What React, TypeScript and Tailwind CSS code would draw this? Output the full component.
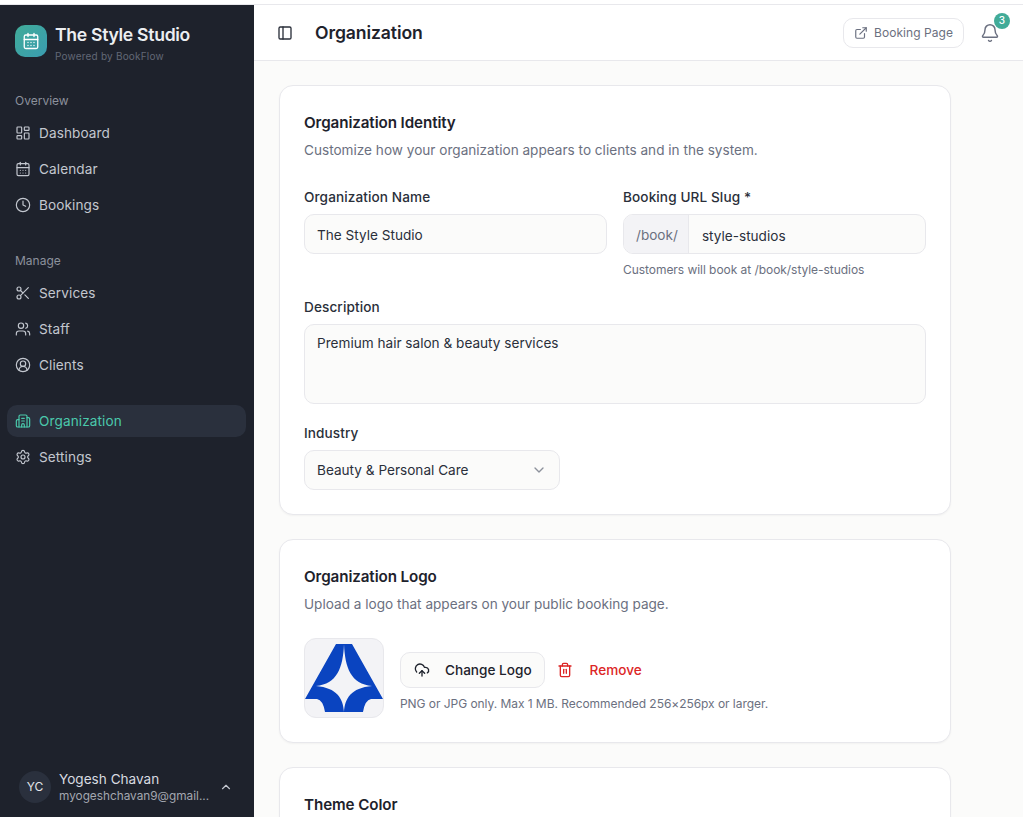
import {
  Bell,
  Building2,
  CalendarDays,
  ChevronDown,
  ChevronUp,
  CircleUserRound,
  Clock,
  CloudUpload,
  ExternalLink,
  LayoutDashboard,
  PanelLeft,
  Scissors,
  Settings,
  Trash2,
  Users,
} from 'lucide-react'
import type { ComponentType, ReactNode } from 'react'

const font = { fontFamily: 'Inter, "Liberation Sans", sans-serif' }

type NavItem = { label: string; icon: ComponentType<{ className?: string; strokeWidth?: number }>; active?: boolean }

const overview: NavItem[] = [
  { label: 'Dashboard', icon: LayoutDashboard },
  { label: 'Calendar', icon: CalendarDays },
  { label: 'Bookings', icon: Clock },
]

const manage: NavItem[] = [
  { label: 'Services', icon: Scissors },
  { label: 'Staff', icon: Users },
  { label: 'Clients', icon: CircleUserRound },
]

const system: NavItem[] = [
  { label: 'Organization', icon: Building2, active: true },
  { label: 'Settings', icon: Settings },
]

function NavRow({ item }: { item: NavItem }) {
  const Icon = item.icon
  return (
    <div
      className={
        item.active
          ? 'ml-[7px] mr-[8px] flex h-8 items-center gap-2 rounded-[10px] bg-[#2a303d] px-2 text-[13.6px] text-[#4ac9ac]'
          : 'ml-[7px] mr-[8px] flex h-8 items-center gap-2 rounded-[10px] px-2 text-[13.6px] text-[#c3c7cf]'
      }
    >
      <Icon className="h-4 w-4 shrink-0" strokeWidth={1.75} />
      <span className="tracking-[0.1px]">{item.label}</span>
    </div>
  )
}

function Sidebar() {
  return (
    <aside className="flex h-full w-[254px] shrink-0 flex-col bg-[#1e222c]">
      <div className="flex items-start gap-2 px-[15px] pt-[18px]">
        <div className="mt-[2px] flex h-8 w-8 items-center justify-center rounded-[10px] bg-gradient-to-br from-[#41ab98] to-[#3a9cb0]">
          <CalendarDays className="h-[18px] w-[18px] text-white" strokeWidth={1.75} />
        </div>
        <div className="flex flex-col">
          <span className="text-[17.6px] leading-[24px] font-semibold tracking-[-0.3px] text-[#eceef1]">The Style Studio</span>
          <span className="mt-[3px] text-[10px] leading-[12px] tracking-[0.2px] text-[#626876]">Powered by BookFlow</span>
        </div>
      </div>
      <div className="mt-[31px] px-[15px] text-[12px] leading-[16px] text-[#8c919c]">Overview</div>
      <div className="mt-[8px] flex flex-col gap-1">
        {overview.map(item => <NavRow key={item.label} item={item} />)}
      </div>
      <div className="mt-[32px] px-[15px] text-[12px] leading-[16px] text-[#8c919c]">Manage</div>
      <div className="mt-[8px] flex flex-col gap-1">
        {manage.map(item => <NavRow key={item.label} item={item} />)}
      </div>
      <div className="mt-[24px] flex flex-col gap-1">
        {system.map(item => <NavRow key={item.label} item={item} />)}
      </div>
      <div className="mt-auto flex items-center pb-[13px] pl-[19px] pr-[21px]">
        <div className="flex h-8 w-8 shrink-0 items-center justify-center rounded-full bg-[#2a303d] text-[12px] text-[#e4e6ea]">YC</div>
        <div className="ml-2 min-w-0 flex-1">
          <div className="text-[13.6px] leading-[18px] text-[#d8dbe0]">Yogesh Chavan</div>
          <div className="whitespace-nowrap text-[11.8px] leading-[16px] text-[#a3a7b0]">myogeshchavan9@gmail...</div>
        </div>
        <ChevronUp className="h-[14px] w-[14px] shrink-0 text-[#c3c7cf]" />
      </div>
    </aside>
  )
}

function Header() {
  return (
    <header className="flex h-[56px] shrink-0 items-center border-b border-[#e8e8ec] bg-white pl-[23px] pr-[23px]">
      <PanelLeft className="h-4 w-4 text-[#2a2f3a]" />
      <h1 className="ml-[22px] pt-[2px] text-[17.6px] font-semibold tracking-[-0.1px] text-[#1e222c]">Organization</h1>
      <div className="ml-auto flex h-[30px] items-center gap-[6px] rounded-[10px] border border-[#e8e8ec] bg-white px-[10px] text-[12px] tracking-[0.05px] text-[#6b7080]">
        <ExternalLink className="h-[14px] w-[14px]" />
        Booking Page
      </div>
      <div className="relative ml-4 flex h-5 w-5 items-center justify-center">
        <Bell className="h-5 w-5 text-[#6b7080]" strokeWidth={1.75} />
        <span className="absolute -right-[10px] -top-[10px] flex h-4 w-4 items-center justify-center rounded-full bg-[#41ab98] text-[10px] font-medium text-white">3</span>
      </div>
    </header>
  )
}

function Logo() {
  return (
    <div className="flex h-20 w-20 shrink-0 items-center justify-center overflow-hidden rounded-[12px] border border-[#e8e8ec] bg-[#f3f3f6]">
      <svg viewBox="0 0 80 80" className="h-20 w-20 shrink-0">
        <path
          d="M32 6 H48 L79 61 H67 Q61 62 59 74 H21 Q19 62 13 61 H1 Z"
          fill="#0a44c0"
        />
        <path
          d="M40 6 C39 30 33 46 12 48 C33 50 39 60 40 74 C41 60 47 50 68 48 C47 46 41 30 40 6 Z"
          fill="#f3f3f6"
        />
      </svg>
    </div>
  )
}

function Card({ title, subtitle, children }: { title: string; subtitle?: string; children?: ReactNode }) {
  return (
    <section className="w-[672px] shrink-0 rounded-[14px] border border-[#e8e8ec] bg-white p-6 shadow-[0_1px_2px_rgba(0,0,0,0.04)]">
      <h2 className="pt-[1px] text-[15.2px] leading-[24px] font-semibold tracking-[-0.1px] text-[#1e222c]">{title}</h2>
      {subtitle && <p className="mt-[5px] text-[13.6px] leading-[20px] text-[#6b7080]">{subtitle}</p>}
      {children}
    </section>
  )
}

const inputClass = 'flex h-10 items-center rounded-[10px] border border-[#e8e8ec] bg-[#fbfbfa] px-3 text-[13.6px] text-[#2a2f3a]'
const labelClass = 'mb-[7px] block text-[13.6px] leading-[20px] font-medium tracking-[0.1px] text-[#2a2f3a]'

export default function App() {
  return (
    <div style={font} className="flex h-screen flex-col overflow-hidden bg-white">
      <div className="h-[4px] shrink-0 bg-white" />
      <div className="flex min-h-0 flex-1 border-t border-[#e8e8ec]">
        <Sidebar />
        <main className="flex min-w-0 flex-1 flex-col">
          <Header />
          <div className="flex min-h-0 flex-1 flex-col gap-6 overflow-hidden bg-[#fbfbfa] pl-[25px] pt-6">
            <Card title="Organization Identity" subtitle="Customize how your organization appears to clients and in the system.">
              <div className="mt-[27px] grid grid-cols-2 gap-x-4">
                <div>
                  <label className={labelClass}>Organization Name</label>
                  <div className={`${inputClass} pt-[2px]`}>The Style Studio</div>
                </div>
                <div>
                  <label className={labelClass}>Booking URL Slug *</label>
                  <div className="flex h-10 overflow-hidden rounded-[10px] border border-[#e8e8ec] bg-[#fbfbfa] text-[13.6px]">
                    <span className="flex items-center border-r border-[#e8e8ec] bg-[#f3f3f6] pl-3 pr-[10px] pt-[2px] text-[#6b7080]">/book/</span>
                    <span className="flex items-center px-[13px] pt-[4px] text-[#2a2f3a]">style-studios</span>
                  </div>
                  <p className="mt-[8px] text-[12px] leading-[16px] tracking-[-0.05px] text-[#6b7080]">Customers will book at /book/style-studios</p>
                </div>
              </div>
              <label className={`${labelClass} mt-[19px]`}>Description</label>
              <div className="h-20 rounded-[10px] border border-[#e8e8ec] bg-[#fbfbfa] px-3 py-2 text-[13.6px] leading-[20px] text-[#2a2f3a]">
                Premium hair salon &amp; beauty services
              </div>
              <label className={`${labelClass} mt-[19px]`}>Industry</label>
              <div className={`${inputClass} w-[256px] justify-between`}>
                Beauty &amp; Personal Care
                <ChevronDown className="h-4 w-4 text-[#8c919c]" />
              </div>
            </Card>
            <Card title="Organization Logo" subtitle="Upload a logo that appears on your public booking page.">
              <div className="mt-[24px] flex items-center gap-4">
                <Logo />
                <div className="pt-2">
                  <div className="flex items-center">
                    <div className="flex h-9 items-center gap-[15px] rounded-[10px] border border-[#e8e8ec] bg-[#fbfbfa] pl-[13px] pr-[12px] text-[13.6px] font-medium text-[#1e222c]">
                      <CloudUpload className="h-4 w-4" />
                      Change Logo
                    </div>
                    <div className="ml-3 flex items-center gap-[17px] text-[13.6px] font-medium text-[#dc2626]">
                      <Trash2 className="h-4 w-4" />
                      Remove
                    </div>
                  </div>
                  <p className="mt-[8px] text-[12px] leading-[16px] tracking-[-0.05px] text-[#6b7080]">PNG or JPG only. Max 1 MB. Recommended 256×256px or larger.</p>
                </div>
              </div>
            </Card>
            <Card title="Theme Color" />
          </div>
        </main>
      </div>
    </div>
  )
}
